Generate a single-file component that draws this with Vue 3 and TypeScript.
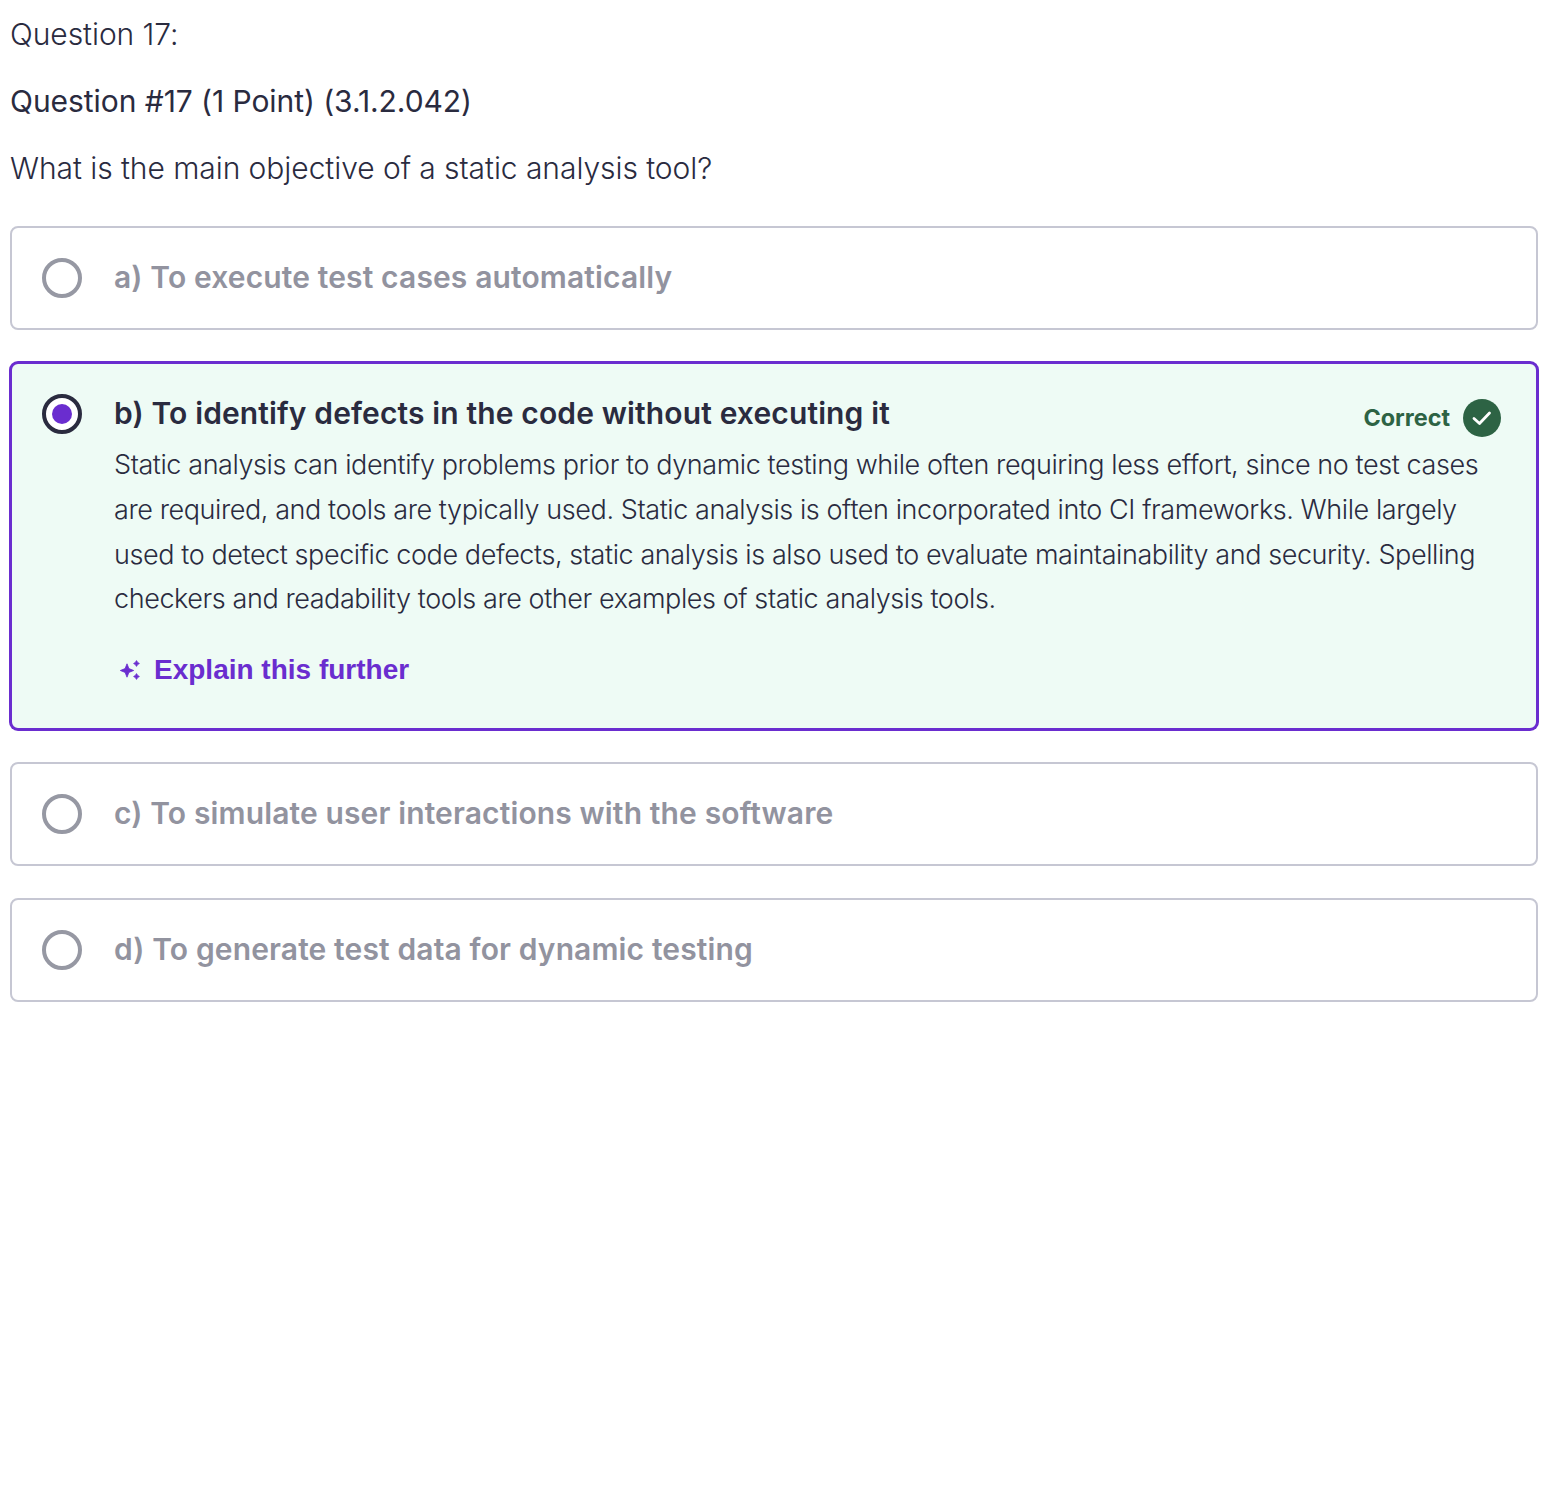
<script setup lang="ts">
interface Option { label: string; selected?: boolean }
const explanation = 'Static analysis can identify problems prior to dynamic testing while often requiring less effort, since no test cases are required, and tools are typically used. Static analysis is often incorporated into CI frameworks. While largely used to detect specific code defects, static analysis is also used to evaluate maintainability and security. Spelling checkers and readability tools are other examples of static analysis tools.'
const options: Option[] = [
  { label: 'a) To execute test cases automatically' },
  { label: 'b) To identify defects in the code without executing it', selected: true },
  { label: 'c) To simulate user interactions with the software' },
  { label: 'd) To generate test data for dynamic testing' },
]
</script>

<template>
  <main class="page">
    <div class="qnum">Question 17:</div>
    <div class="qtitle">Question #17 (1 Point) (3.1.2.042)</div>
    <div class="qtext">What is the main objective of a static analysis tool?</div>
    <div class="options">
      <div v-for="o in options" :key="o.label" class="option" :class="{ selected: o.selected }">
        <span class="radio"><span v-if="o.selected" class="dot"></span></span>
        <div class="body">
          <div class="head">
            <div class="label">{{ o.label }}</div>
            <div v-if="o.selected" class="correct">
              <span>Correct</span>
              <svg width="38" height="38" viewBox="0 0 38 38">
                <circle cx="19" cy="19" r="19" fill="#2d6344" />
                <path d="M11 19.5 L16.5 24.5 L26.5 14" fill="none" stroke="#fff" stroke-width="2.8" stroke-linecap="round" stroke-linejoin="round" />
              </svg>
            </div>
          </div>
          <template v-if="o.selected">
            <p class="explain">{{ explanation }}</p>
            <div class="further">
              <svg width="24" height="24" viewBox="0 0 24 24" fill="#6a2dcf" stroke="#6a2dcf" stroke-width="0.8" stroke-linejoin="round">
                <path d="M9 5.8 L10.9 10.6 L15.7 12.5 L10.9 14.4 L9 19.2 L7.1 14.4 L2.3 12.5 L7.1 10.6 Z" />
                <path d="M18.5 2.6 L19.6 4.4 L21.4 5.5 L19.6 6.6 L18.5 8.4 L17.4 6.6 L15.6 5.5 L17.4 4.4 Z" />
                <path d="M18.5 15.6 L19.6 17.4 L21.4 18.5 L19.6 19.6 L18.5 21.4 L17.4 19.6 L15.6 18.5 L17.4 17.4 Z" />
              </svg>
              <span>Explain this further</span>
            </div>
          </template>
        </div>
      </div>
    </div>
  </main>
</template>

<style>
body { background: #fff; }
</style>

<style scoped>
.page {
  padding: 13px 14px 0 10px;
  min-height: 1473px;
  font-family: Inter, "Noto Sans", sans-serif;
  color: #2a2b3f;
}
.qnum, .qtext {
  font-size: 30px;
  line-height: 42px;
  font-weight: 300;
  letter-spacing: -0.06px;
}
.qtitle {
  font-size: 30px;
  line-height: 42px;
  font-weight: 400;
  letter-spacing: -0.06px;
  margin-top: 25px;
}
.qtext { margin-top: 25px; }
.options {
  margin-top: 37px;
  display: flex;
  flex-direction: column;
  gap: 32px;
}
.option {
  display: flex;
  align-items: flex-start;
  border: 2px solid #c6c7d3;
  border-radius: 8px;
  padding: 30px 34px 30px 30px;
  min-height: 104px;
  box-sizing: border-box;
  color: #92939f;
}
.option.selected {
  border-color: #6a2dcf;
  box-shadow: 0 0 0 1px #6a2dcf;
  background: #eefbf5;
  color: #2a2b3f;
  padding-bottom: 37px;
}
.radio {
  flex: none;
  width: 40px;
  height: 40px;
  box-sizing: border-box;
  border: 4px solid #9698a3;
  border-radius: 50%;
  margin-right: 32px;
  display: flex;
  align-items: center;
  justify-content: center;
}
.selected .radio {
  border-color: #2a2b3f;
  background: #fff;
}
.dot {
  width: 20px;
  height: 20px;
  border-radius: 50%;
  background: #6a2dcf;
}
.body { flex: 1; min-width: 0; }
.head {
  display: flex;
  align-items: flex-start;
  justify-content: space-between;
}
.label {
  font-size: 30px;
  line-height: 38px;
  padding-bottom: 2px;
  font-weight: 600;
  letter-spacing: 0.13px;
}
.explain {
  margin: 6px 0 0;
  font-size: 27px;
  line-height: 44.8px;
  font-weight: 300;
  letter-spacing: -0.42px;
}
.further {
  display: flex;
  align-items: center;
  gap: 12px;
  margin: 27px 0 0 4px;
  color: #6a2dcf;
  font-family: "Liberation Sans", sans-serif;
  font-size: 28px;
  line-height: 42px;
  font-weight: 700;
}
.correct {
  flex: none;
  display: flex;
  align-items: center;
  gap: 13px;
  margin: 5px 1px 0 0;
  color: #2d6344;
  font-size: 23.4px;
  line-height: 38px;
  font-weight: 700;
}
</style>
